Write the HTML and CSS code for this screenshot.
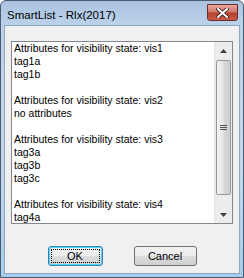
FILE: index.html
```html
<!DOCTYPE html>
<html lang="en">
<head>
    <meta charset="UTF-8">
    <meta name="viewport" content="width=device-width, initial-scale=1.0">
    <title>SmartList - Rlx(2017)</title>
    <link rel="stylesheet" href="styles.css">
</head>
<body>
    <div class="window">
        <div class="titlebar">
            <span class="title">SmartList - Rlx(2017)</span>
            <div class="close" aria-label="Close">
                <svg width="13" height="10" viewBox="0 0 13 10">
                    <path d="M2 1 L11 9 M11 1 L2 9" stroke="#3b1a1a" stroke-width="3.6" stroke-linecap="square"/>
                    <path d="M2 1 L11 9 M11 1 L2 9" stroke="#ffffff" stroke-width="2" stroke-linecap="square"/>
                </svg>
            </div>
        </div>

        <div class="client">
            <div class="listbox">
                <div class="lines">
                    <div>Attributes for visibility state: vis1</div>
                    <div>tag1a</div>
                    <div>tag1b</div>
                    <div>&nbsp;</div>
                    <div>Attributes for visibility state: vis2</div>
                    <div>no attributes</div>
                    <div>&nbsp;</div>
                    <div>Attributes for visibility state: vis3</div>
                    <div>tag3a</div>
                    <div>tag3b</div>
                    <div>tag3c</div>
                    <div>&nbsp;</div>
                    <div>Attributes for visibility state: vis4</div>
                    <div>tag4a</div>
                </div>
                <div class="scrollbar">
                    <div class="arrow">
                        <svg width="7" height="4" viewBox="0 0 7 4"><path d="M0 4 L3.5 0 L7 4 Z" fill="#404040"/></svg>
                    </div>
                    <div class="track">
                        <div class="thumb">
                            <div class="grip"></div>
                        </div>
                    </div>
                    <div class="arrow">
                        <svg width="7" height="4" viewBox="0 0 7 4"><path d="M0 0 L7 0 L3.5 4 Z" fill="#404040"/></svg>
                    </div>
                </div>
            </div>

            <div class="buttons">
                <button class="btn default"><span class="focus">OK</span></button>
                <button class="btn cancel">Cancel</button>
            </div>
        </div>
    </div>
</body>
</html>
```

FILE: styles.css
```css
body {
    margin: 0;
    background: #ffffff;
    font-family: 'Liberation Sans', Arial, sans-serif;
}

.window {
    width: 244px;
    height: 278px;
    box-sizing: border-box;
    border: 1px solid #4b5c70;
    border-radius: 6px 6px 0 0;
    background: linear-gradient(to bottom, #a9c3e0 0, #bcd2ea 24px, #c4d8ee 60%, #a6cdee 100%);
    display: flex;
    flex-direction: column;
    padding: 0 3px 3px 3px;
}

.titlebar {
    height: 24px;
    display: flex;
    align-items: center;
    justify-content: space-between;
    padding: 0 2px 0 3px;
}

.title {
    font-family: 'Liberation Sans', Arial, sans-serif;
    font-size: 11.5px;
    color: #000000;
    margin-top: 4px;
}

.close {
    width: 29px;
    height: 15px;
    margin-top: -1px;
    border: 1px solid #6b2b2b;
    border-radius: 0 0 3px 3px;
    background: linear-gradient(to bottom, #e8a89e 0, #d0776a 45%, #b8412f 55%, #c65a48 100%);
    display: flex;
    align-items: center;
    justify-content: center;
}

.client {
    flex: 1;
    background: #f0f0f0;
    border: 1px solid #8ea5c0;
    padding: 15px 6px 0 6px;
    display: flex;
    flex-direction: column;
}

.listbox {
    height: 183px;
    box-sizing: border-box;
    border: 1px solid #828790;
    background: #ffffff;
    display: flex;
}

.lines {
    flex: 1;
    padding: 0 0 0 2px;
    font-size: 10.5px;
    line-height: 13px;
    color: #000000;
    overflow: hidden;
}

.scrollbar {
    width: 17px;
    background: #ececec;
    border-left: 1px solid #e4e4e4;
    display: flex;
    flex-direction: column;
}

.arrow {
    height: 17px;
    display: flex;
    align-items: center;
    justify-content: center;
}

.track {
    flex: 1;
    padding: 1px 1px 0 1px;
}

.thumb {
    height: 133px;
    border: 1px solid #979797;
    border-radius: 2px;
    background: linear-gradient(to right, #f4f4f4 0, #e6e6e6 45%, #d6d6d6 55%, #cfcfcf 100%);
    display: flex;
    align-items: center;
    justify-content: center;
}

.grip {
    width: 7px;
    height: 5px;
    background: repeating-linear-gradient(to bottom, #555555 0, #555555 1px, transparent 1px, transparent 2px);
}

.buttons {
    display: flex;
    justify-content: center;
    gap: 31px;
    margin-top: 22px;
}

.btn {
    height: 20px;
    padding: 0;
    font-family: 'Liberation Sans', Arial, sans-serif;
    font-size: 11px;
    color: #000000;
    border: 1px solid #707070;
    border-radius: 3px;
    background: linear-gradient(to bottom, #f2f2f2 0, #ebebeb 50%, #dddddd 51%, #cfcfcf 100%);
}

.btn.default {
    width: 55px;
    border-color: #3c7fb1;
    box-shadow: inset 0 0 0 1px #48d8fb;
    display: flex;
    align-items: center;
    justify-content: center;
}

.focus {
    width: 49px;
    height: 14px;
    box-sizing: border-box;
    border: 1px dotted #000000;
    line-height: 12px;
}

.btn.cancel {
    width: 63px;
}
```
